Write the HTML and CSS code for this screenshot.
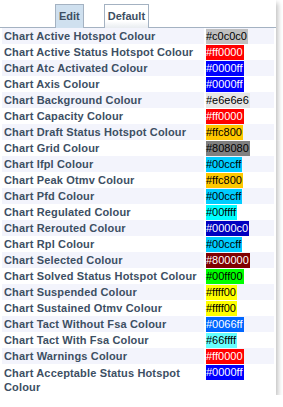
FILE: index.html
```html
<!DOCTYPE html>
<html>
<head>
<meta charset="utf-8">
<link rel="stylesheet" href="styles.css">
</head>
<body>
<div class="panel">
  <div class="tabs">
    <div class="tab active">Edit</div>
    <div class="tab">Default</div>
  </div>
  <table class="grid">
    <colgroup><col class="c1"><col class="c2"></colgroup>
    <tr><td class="lbl">Chart Active Hotspot Colour</td><td class="val"><span class="sw" style="background:#c0c0c0;color:#000">#c0c0c0</span></td></tr>
    <tr><td class="lbl">Chart Active Status Hotspot Colour</td><td class="val"><span class="sw" style="background:#ff0000;color:#fff">#ff0000</span></td></tr>
    <tr><td class="lbl">Chart Atc Activated Colour</td><td class="val"><span class="sw" style="background:#0000ff;color:#fff">#0000ff</span></td></tr>
    <tr><td class="lbl">Chart Axis Colour</td><td class="val"><span class="sw" style="background:#0000ff;color:#fff">#0000ff</span></td></tr>
    <tr><td class="lbl">Chart Background Colour</td><td class="val"><span class="sw" style="background:#e6e6e6;color:#000">#e6e6e6</span></td></tr>
    <tr><td class="lbl">Chart Capacity Colour</td><td class="val"><span class="sw" style="background:#ff0000;color:#fff">#ff0000</span></td></tr>
    <tr><td class="lbl">Chart Draft Status Hotspot Colour</td><td class="val"><span class="sw" style="background:#ffc800;color:#000">#ffc800</span></td></tr>
    <tr><td class="lbl">Chart Grid Colour</td><td class="val"><span class="sw" style="background:#808080;color:#000">#808080</span></td></tr>
    <tr><td class="lbl">Chart Ifpl Colour</td><td class="val"><span class="sw" style="background:#00ccff;color:#000">#00ccff</span></td></tr>
    <tr><td class="lbl">Chart Peak Otmv Colour</td><td class="val"><span class="sw" style="background:#ffc800;color:#000">#ffc800</span></td></tr>
    <tr><td class="lbl">Chart Pfd Colour</td><td class="val"><span class="sw" style="background:#00ccff;color:#000">#00ccff</span></td></tr>
    <tr><td class="lbl">Chart Regulated Colour</td><td class="val"><span class="sw" style="background:#00ffff;color:#000">#00ffff</span></td></tr>
    <tr><td class="lbl">Chart Rerouted Colour</td><td class="val"><span class="sw" style="background:#0000c0;color:#fff">#0000c0</span></td></tr>
    <tr><td class="lbl">Chart Rpl Colour</td><td class="val"><span class="sw" style="background:#00ccff;color:#000">#00ccff</span></td></tr>
    <tr><td class="lbl">Chart Selected Colour</td><td class="val"><span class="sw" style="background:#800000;color:#fff">#800000</span></td></tr>
    <tr><td class="lbl">Chart Solved Status Hotspot Colour</td><td class="val"><span class="sw" style="background:#00ff00;color:#000">#00ff00</span></td></tr>
    <tr><td class="lbl">Chart Suspended Colour</td><td class="val"><span class="sw" style="background:#ffff00;color:#000">#ffff00</span></td></tr>
    <tr><td class="lbl">Chart Sustained Otmv Colour</td><td class="val"><span class="sw" style="background:#ffff00;color:#000">#ffff00</span></td></tr>
    <tr><td class="lbl">Chart Tact Without Fsa Colour</td><td class="val"><span class="sw" style="background:#0066ff;color:#fff">#0066ff</span></td></tr>
    <tr><td class="lbl">Chart Tact With Fsa Colour</td><td class="val"><span class="sw" style="background:#66ffff;color:#000">#66ffff</span></td></tr>
    <tr><td class="lbl">Chart Warnings Colour</td><td class="val"><span class="sw" style="background:#ff0000;color:#fff">#ff0000</span></td></tr>
    <tr><td class="lbl">Chart Acceptable Status Hotspot Colour</td><td class="val"><span class="sw" style="background:#0000ff;color:#fff">#0000ff</span></td></tr>
  </table>
</div>
</body>
</html>
```

FILE: styles.css
```css
html, body {
  margin: 0;
  padding: 0;
  background: #ffffff;
}
.panel {
  width: 276px;
  background: #ffffff;
  box-shadow: 2px 3px 5px rgba(0, 0, 0, 0.25);
  padding-bottom: 0;
}
.tabs {
  display: flex;
  gap: 20px;
  padding-left: 55px;
  padding-top: 4px;
  height: 23px;
  border-bottom: 1px solid #a4b2c2;
}
.tab {
  box-sizing: border-box;
  height: 24px;
  border: 1px solid #a4b2c2;
  border-bottom: none;
  padding: 0 3px;
  font-family: "Liberation Sans", Arial, sans-serif;
  font-weight: bold;
  font-size: 11px;
  line-height: 23px;
  color: #3d4f63;
  background: linear-gradient(#ffffff 70%, #e8ecf0);
}
.tab.active {
  background: #cfe0ef;
}
.grid {
  border-collapse: separate;
  border-spacing: 2px 0;
  width: 276px;
  table-layout: fixed;
  font-family: "Liberation Sans", Arial, sans-serif;
  font-size: 11px;
}
.c1 {
  width: 202px;
}
.grid tr:nth-child(odd) td {
  background: #f3f4fc;
}
.lbl {
  font-weight: bold;
  color: #3d4f63;
  letter-spacing: 0.15px;
  padding: 2px 0 0 2px;
  line-height: 13px;
  height: 16px;
  vertical-align: top;
  box-sizing: border-box;
}
.grid tr:last-child .lbl {
  line-height: 14px;
  padding-bottom: 1px;
}
.val {
  padding: 1px 0 0 0;
  vertical-align: top;
}
.sw {
  display: inline-block;
  height: 15px;
  line-height: 15px;
  padding: 0 1px 0 0;
  font-size: 11px;
}
```
